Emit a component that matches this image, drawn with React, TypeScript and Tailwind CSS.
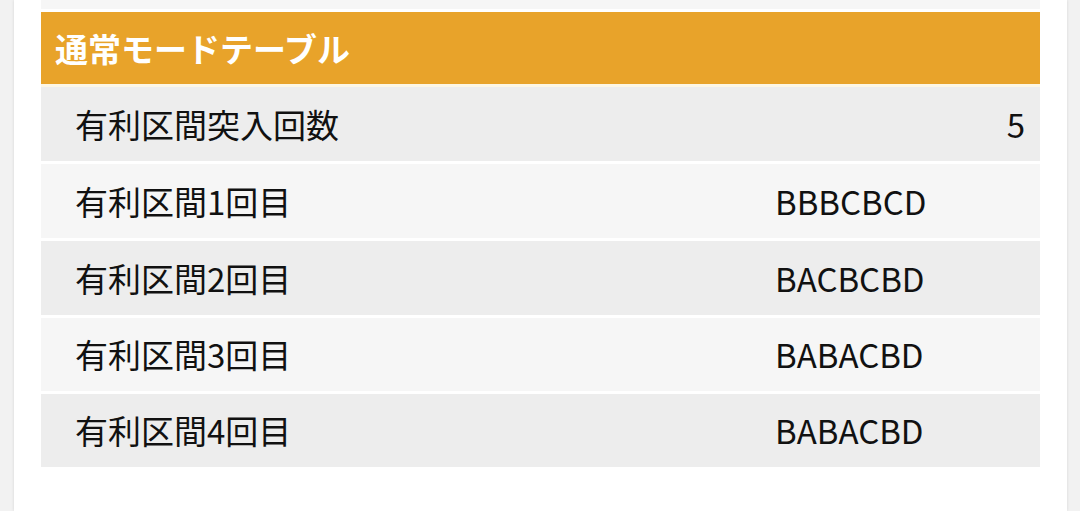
import React from "react";

const rows = [
  { label: "有利区間1回目", value: "BBBCBCD" },
  { label: "有利区間2回目", value: "BACBCBD" },
  { label: "有利区間3回目", value: "BABACBD" },
  { label: "有利区間4回目", value: "BABACBD" },
];

export default function App() {
  return (
    <div
      className="w-[1080px] h-[511px] bg-[#f2f2f2] flex pl-[14px] pr-[13px] overflow-hidden"
      style={{ fontFamily: '"Noto Sans CJK JP", "Noto Sans", sans-serif' }}
    >
      <div className="flex-1 bg-white shadow-[0_0_3px_rgba(0,0,0,0.12)] px-[27px] flex flex-col">
        <div className="h-[9px] bg-[#f6f6f6]" />
        <div className="h-[3px]" />
        <div className="h-[72px] bg-[#e8a32a] flex items-center pl-[14px] text-white font-bold text-[33px] leading-none">
          通常モードテーブル
        </div>
        <div className="h-[3px] bg-[#fdf6e4]" />
        <div className="flex flex-col gap-[3px] text-[#111] text-[33px] leading-none">
          <div className="h-[74px] bg-[#ededed] flex items-center pl-[34px] pr-[15px]">
            <span className="flex-1">有利区間突入回数</span>
            <span>5</span>
          </div>
          {rows.map((r, i) => (
            <div
              key={i}
              className={
                "flex items-center pl-[34px] " +
                (i % 2 === 0 ? "bg-[#f6f6f6] " : "bg-[#ededed] ") +
                (i < 2 ? "h-[74px]" : "h-[73px]")
              }
            >
              <span className="w-[700px]">{r.label}</span>
              <span>{r.value}</span>
            </div>
          ))}
        </div>
      </div>
    </div>
  );
}
